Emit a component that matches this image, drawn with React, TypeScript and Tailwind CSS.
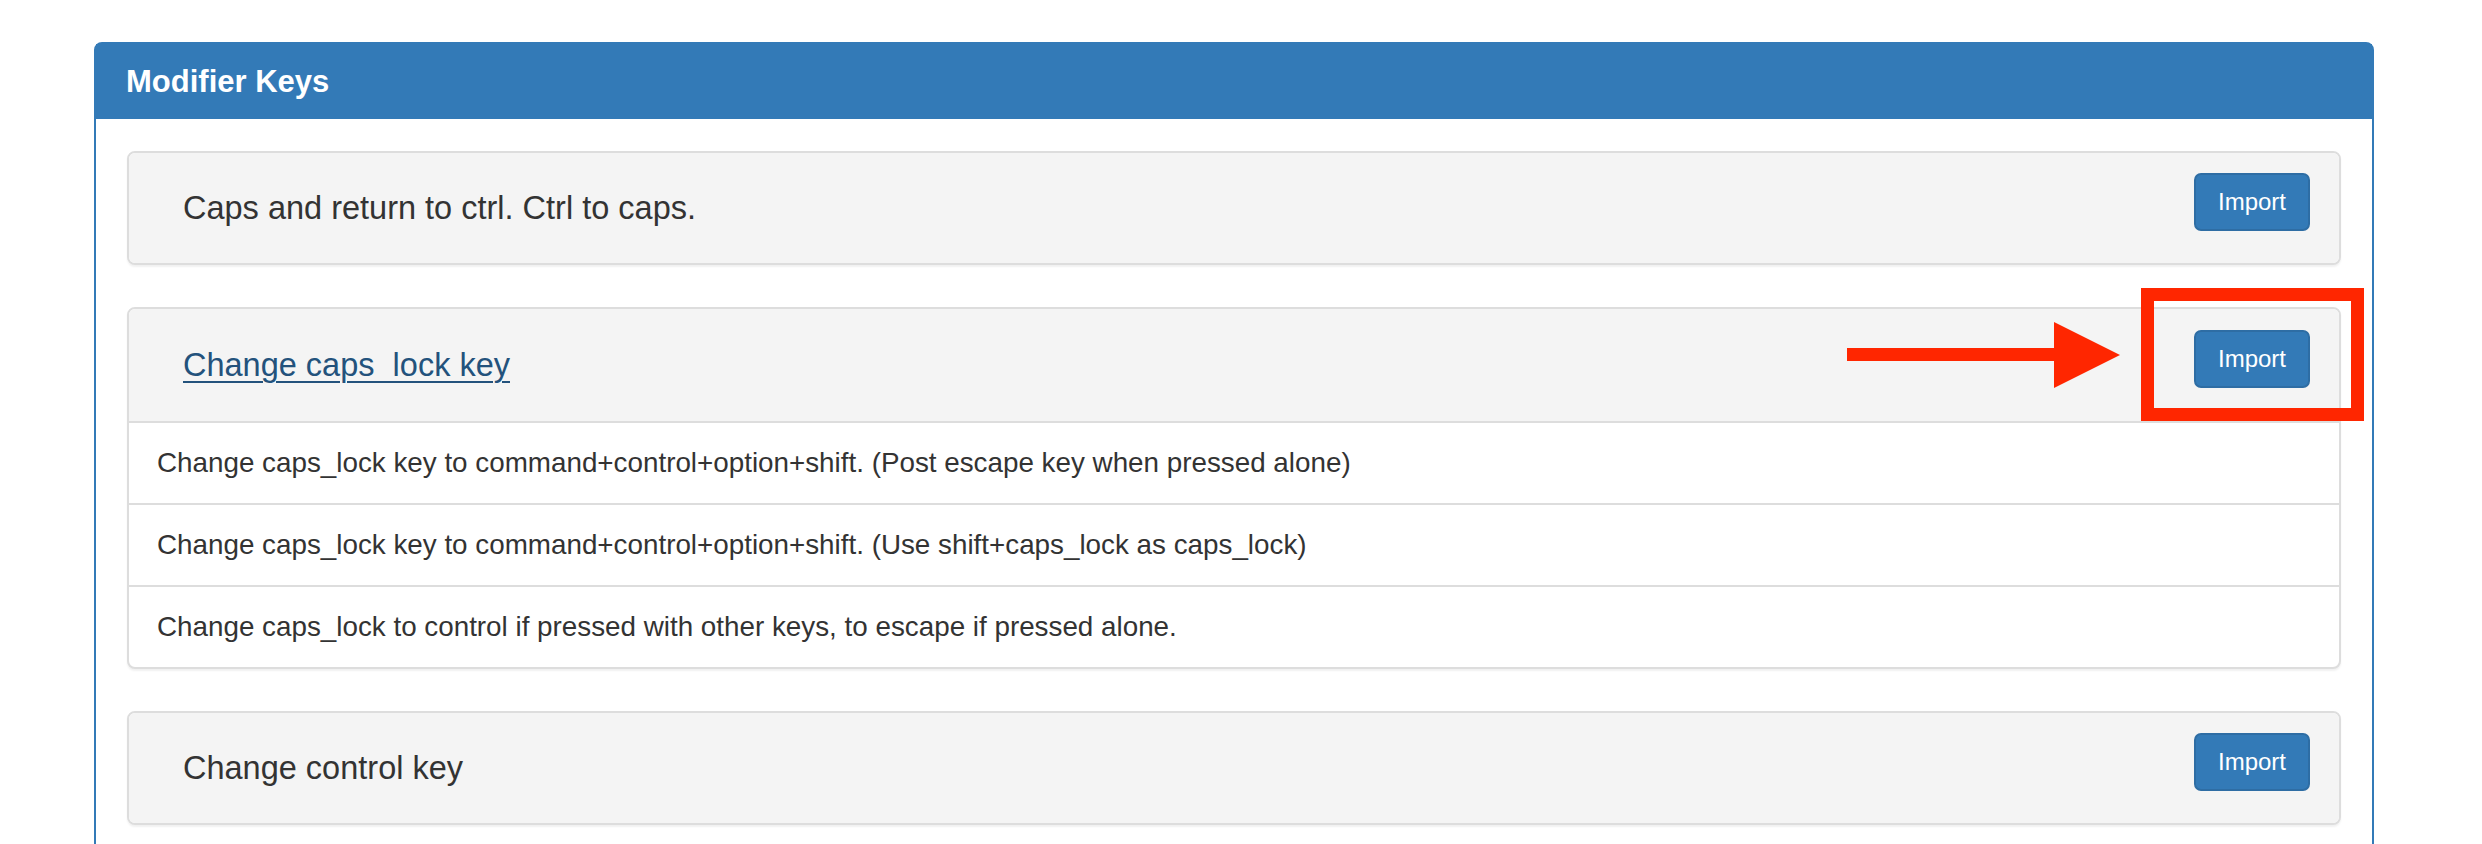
const groups = [
  {
    id: 1,
    title: "Caps and return to ctrl. Ctrl to caps.",
    link: false,
    rules: [] as string[],
  },
  {
    id: 2,
    title: "Change caps_lock key",
    link: true,
    rules: [
      "Change caps_lock key to command+control+option+shift. (Post escape key when pressed alone)",
      "Change caps_lock key to command+control+option+shift. (Use shift+caps_lock as caps_lock)",
      "Change caps_lock to control if pressed with other keys, to escape if pressed alone.",
    ],
  },
  {
    id: 3,
    title: "Change control key",
    link: false,
    rules: [] as string[],
  },
]

const ImportButton = () => (
  <button className="h-[58px] w-[116px] shrink-0 rounded-[7px] border-2 border-[#2e6da4] bg-[#337ab7] text-[24px] leading-none text-white">
    Import
  </button>
)

export default function App() {
  return (
    <div
      className="relative min-h-[844px] bg-white pt-[42px] pl-[94px] pr-[108px] text-[#333]"
      style={{ fontFamily: '"Liberation Sans", Arial, Helvetica, sans-serif' }}
    >
      <div className="rounded-t-[8px] border-2 border-[#337ab7] bg-white">
        <div className="flex h-[75px] items-center bg-[#337ab7] px-[30px]">
          <h3 className="text-[31px] font-bold leading-none text-white">Modifier Keys</h3>
        </div>

        <div className="flex flex-col gap-[42px] px-[31px] pt-[32px] pb-[80px]">
          {groups.map((g) => (
            <div
              key={g.id}
              className="overflow-hidden rounded-[8px] border-2 border-[#ddd] bg-white shadow-[0_2px_2px_rgba(0,0,0,0.06)]"
            >
              <div
                className={
                  g.rules.length
                    ? "flex items-start justify-between border-b-2 border-[#ddd] bg-[#f4f4f4] pl-[54px] pr-[29px] pt-[21px] pb-[33px]"
                    : "flex items-start justify-between bg-[#f4f4f4] pl-[54px] pr-[29px] pt-[20px] pb-[32px]"
                }
              >
                <h4 className="pt-[13px] text-[32.5px] leading-[44px]">
                  {g.link ? (
                    <a href="#" className="text-[#23527c] underline decoration-2 underline-offset-[5px]">
                      {g.title}
                    </a>
                  ) : (
                    g.title
                  )}
                </h4>
                <ImportButton />
              </div>
              {g.rules.map((r, i) => (
                <div
                  key={i}
                  className={
                    i === 0
                      ? "px-[28px] py-[20px] text-[27.8px] leading-[40px]"
                      : "border-t-2 border-[#ddd] px-[28px] py-[20px] text-[27.8px] leading-[40px]"
                  }
                >
                  {r}
                </div>
              ))}
            </div>
          ))}
        </div>
      </div>

      {/* annotation: arrow pointing at the import button */}
      <div className="absolute left-[1847px] top-[322px]">
        <svg width="274" height="66" viewBox="0 0 274 66">
          <rect x="0" y="26" width="208" height="13" fill="#ff2600" />
          <polygon points="207,0 273,33 207,66" fill="#ff2600" />
        </svg>
      </div>
      <div className="absolute left-[2141px] top-[288px] h-[133px] w-[223px] border-[13px] border-[#ff2600]" />
    </div>
  )
}
